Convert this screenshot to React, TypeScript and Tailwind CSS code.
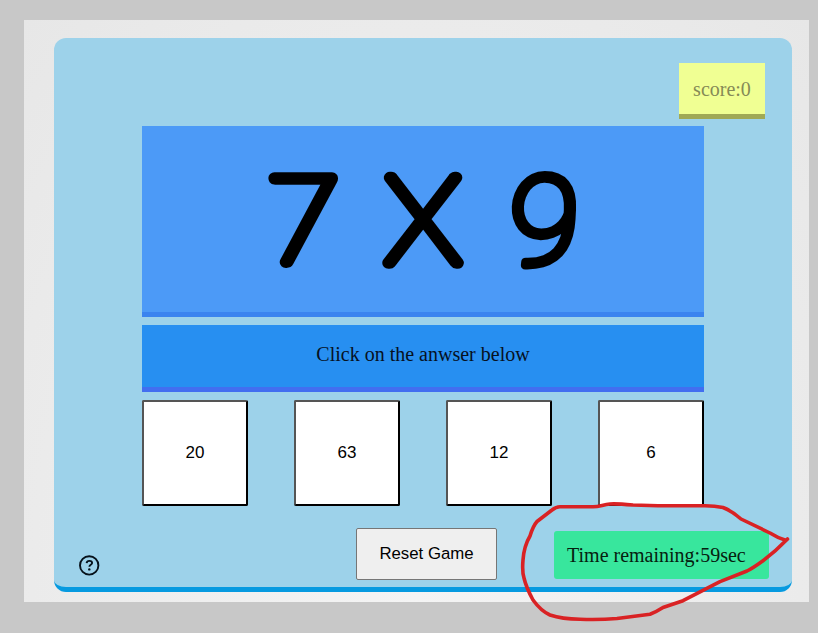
const answers = [20, 63, 12, 6];

function Question() {
  return (
    <svg width="562" height="186" viewBox="142 126 562 186" role="img" aria-label="7 X 9">
      <g
        className="font-['Lato',sans-serif] font-thin"
        fill="#000"
        stroke="#000"
        strokeWidth="11.5"
        strokeLinejoin="round"
        strokeLinecap="round"
      >
        <text transform="translate(265.4 261.8) scale(1.05 1)" fontSize="120">7</text>
        <text transform="translate(384.6 262.5) scale(1.045 1)" fontSize="123">X</text>
        <text
          className="font-['Roboto',sans-serif]"
          transform="translate(506.8 263.5) skewX(-3) scale(1.04 1)"
          fontSize="123"
          strokeWidth="8.5"
        >
          9
        </text>
      </g>
    </svg>
  );
}

function HelpIcon() {
  return (
    <svg width="22" height="22" viewBox="0 0 22 22" fill="none" stroke="#06111a" strokeWidth="1.9">
      <circle cx="11.2" cy="11.4" r="9.2" />
      <path d="M8.6 9.1c.2-1.4 1.2-2.2 2.8-2.2 1.6 0 2.7.8 2.7 2.1 0 1.9-2.7 1.7-2.7 3.7" />
      <circle cx="11.3" cy="15.4" r="1.2" fill="#06111a" stroke="none" />
    </svg>
  );
}

export default function App() {
  return (
    <div className="relative h-[633px] w-[818px] overflow-hidden bg-[#c8c8c8] pt-5 pl-6 font-['Liberation_Serif',serif] text-black">
      <main className="h-[582px] w-[785px] bg-[radial-gradient(ellipse_at_50%_100%,#f4f4f4,#e7e7e7)] pt-[18px] pl-[30px]">
        <section className="flex h-[554px] w-[738px] flex-col rounded-xl border-b-5 border-[#069ae0] bg-[#9dd2ea] pt-[25px]">
          <div className="mr-[27px] flex h-14 w-[86px] items-center justify-center self-end border-b-5 border-[#a0a955] bg-[#f0ff93] text-[20px] text-[#858a56]">
            score:0
          </div>
          <div className="mt-[7px] ml-[88px] w-[562px] border-b-5 border-[#3b84ef] bg-[#4c9af7]">
            <Question />
          </div>
          <div className="mt-2 ml-[88px] flex h-[67px] w-[562px] justify-center border-b-5 border-[#426ef0] bg-[#278ff1] pt-[14px] text-[20px] text-[#06111f]">
            Click on the anwser below
          </div>
          <div className="mt-2 ml-[88px] flex w-[562px] justify-between">
            {answers.map((answer) => (
              <button
                key={answer}
                className="h-[106px] w-[106px] rounded-[2px] border-2 border-t-[#555] border-r-black border-b-black border-l-[#555] bg-white font-['Liberation_Sans',sans-serif] text-[17px]"
              >
                {answer}
              </button>
            ))}
          </div>
          <div className="mt-[22px] ml-6 flex items-start">
            <div className="mt-[26px]">
              <HelpIcon />
            </div>
            <button className="ml-[256px] h-[52px] w-[141px] rounded-[2px] border border-[#767676] bg-[#efefef] font-['Liberation_Sans',sans-serif] text-[16.8px]">
              Reset Game
            </button>
            <div className="mt-[3px] ml-[57px] flex h-12 w-[215px] items-center rounded-[3px] bg-[#38e69d] pl-[13px] text-[20px] text-[#06200f]">
              Time remaining:59sec
            </div>
          </div>
        </section>
      </main>
      <svg className="pointer-events-none absolute inset-0" width="818" height="633" fill="none" stroke="#d92224" strokeWidth="3.6" strokeLinecap="round" strokeLinejoin="round">
        <path d="M785 540Q778 538 770 533L741 519Q732 511 723 507.5Q714 505.5 703 505.7H658L633 505Q616 503.5 610 504C603 504.5 600 506.7 593 506.7H560Q556 506.7 552 510L537 521.5Q533 526 530 536Q524 546 523 560Q522 572 524 578Q526 587 533 600Q541 611 550 615Q562 619 580 619.3Q600 620 617 618.5L650 614.3Q656 612 663 607.5L683 600.7L720 581.7L747 571Q753 568 763 560.7Q776 551 787.5 539" />
      </svg>
    </div>
  );
}
